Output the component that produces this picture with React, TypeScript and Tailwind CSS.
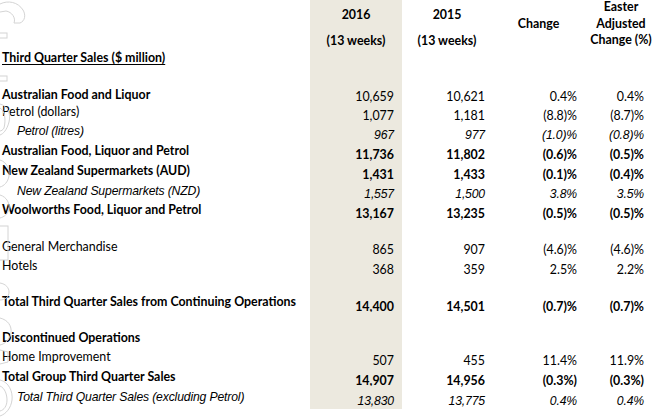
import React from "react";

type Kind = "b" | "n" | "i";
type Row = {
  label: string;
  kind: Kind;
  valKind?: Kind;
  vals?: string[];
  h: number;
  lpt: number;
  npt: number;
  indent?: boolean;
};

const rows: (Row | { blank: number })[] = [
  { label: "Australian Food and Liquor", kind: "b", valKind: "n", vals: ["10,659", "10,621", "0.4%", "0.4%"], h: 19, lpt: 4, npt: 6 },
  { label: "Petrol (dollars)", kind: "n", vals: ["1,077", "1,181", "(8.8)%", "(8.7)%"], h: 19, lpt: 2, npt: 6 },
  { label: "Petrol (litres)", kind: "i", indent: true, vals: ["967", "977", "(1.0)%", "(0.8)%"], h: 19, lpt: 2, npt: 6 },
  { label: "Australian Food, Liquor and Petrol", kind: "b", vals: ["11,736", "11,802", "(0.6)%", "(0.5)%"], h: 20, lpt: 3, npt: 7 },
  { label: "New Zealand Supermarkets (AUD)", kind: "b", vals: ["1,431", "1,433", "(0.1)%", "(0.4)%"], h: 20, lpt: 3, npt: 7 },
  { label: "New Zealand Supermarkets (NZD)", kind: "i", indent: true, vals: ["1,557", "1,500", "3.8%", "3.5%"], h: 20, lpt: 3, npt: 6 },
  { label: "Woolworths Food, Liquor and Petrol", kind: "b", vals: ["13,167", "13,235", "(0.5)%", "(0.5)%"], h: 19, lpt: 2, npt: 6 },
  { blank: 17 },
  { label: "General Merchandise", kind: "n", vals: ["865", "907", "(4.6)%", "(4.6)%"], h: 19, lpt: 3, npt: 6 },
  { label: "Hotels", kind: "n", vals: ["368", "359", "2.5%", "2.2%"], h: 19, lpt: 3, npt: 7 },
  { blank: 15 },
  { label: "Total Third Quarter Sales from Continuing Operations", kind: "b", vals: ["14,400", "14,501", "(0.7)%", "(0.7)%"], h: 22, lpt: 5, npt: 10 },
  { blank: 16 },
  { label: "Discontinued Operations", kind: "b", h: 19, lpt: 3, npt: 0 },
  { label: "Home Improvement", kind: "n", vals: ["507", "455", "11.4%", "11.9%"], h: 19, lpt: 3, npt: 7 },
  { label: "Total Group Third Quarter Sales", kind: "b", vals: ["14,907", "14,956", "(0.3%)", "(0.3%)"], h: 20, lpt: 4, npt: 8 },
  { label: "Total Third Quarter Sales (excluding Petrol)", kind: "i", indent: true, vals: ["13,830", "13,775", "0.4%", "0.4%"], h: 23, lpt: 4, npt: 8 },
];

function kindClass(k: Kind) {
  if (k === "b") return "font-bold";
  if (k === "i") return "italic font-normal font-['Liberation_Sans',Arial,sans-serif] text-[12.2px] tracking-[-0.15px]";
  return "font-normal";
}

const GRID = "grid grid-cols-[310px_92px_90px_93px_72px]";

function Watermark() {
  return (
    <svg
      className="absolute left-0 top-0 pointer-events-none"
      width="30"
      height="417"
      viewBox="0 0 30 417"
      fill="none"
      stroke="#d4d4d4"
      strokeWidth="1"
    >
      <path d="M0 4 C8 0 18 2 23 10 C26 15 25 21 20 23 L14 23 C16 18 12 12 6 11 L0 12" />
      <rect x="-2" y="33" width="9" height="5" />
      <rect x="-2" y="76" width="9" height="5" />
      <path d="M0 104 C8 106 11 114 9 122 C7 130 3 134 0 135" />
      <path d="M0 108 C5 111 6 120 4 128 C3 130 1 131 0 131" />
      <path d="M0 160 C7 162 10 170 9 176 C8 182 4 186 0 187" />
      <path d="M0 195 C7 197 10 204 9 209 C8 214 4 217 0 218" />
      <rect x="-2" y="226" width="10" height="34" />
      <path d="M0 283 C6 284 9 288 9 292 C9 297 5 300 0 300" />
      <path d="M0 318 C8 320 12 326 11 333 C10 339 5 344 0 345" />
      <path d="M0 350 L8 352 L8 362 L0 364" />
      <path d="M0 380 C9 382 13 392 12 400 C11 408 6 414 0 416" />
      <path d="M0 386 C5 388 7 395 7 400 C7 406 4 410 0 411" />
    </svg>
  );
}

export default function App() {
  return (
    <div className="relative w-[657px] h-[417px] bg-white text-black overflow-hidden font-['Lato','Liberation_Sans',sans-serif] text-[12.4px] leading-[14px]">
      {/* header */}
      <div className={`${GRID} h-[84px]`}>
        <div className="pl-[2px] pt-[51px]">
          <span className="font-bold underline underline-offset-[2px] decoration-1">
            Third Quarter Sales ($ million)
          </span>
        </div>
        <div className="bg-[#ece9df] font-bold text-center pt-[8px]">
          <div>2016</div>
          <div className="mt-[12px]">(13 weeks)</div>
        </div>
        <div className="font-bold text-center pt-[8px]">
          <div>2015</div>
          <div className="mt-[12px]">(13 weeks)</div>
        </div>
        <div className="font-bold text-center pt-[17px]">Change</div>
        <div className="font-bold text-center leading-[16.5px] -mt-[1px]">
          <div>Easter</div>
          <div>Adjusted</div>
          <div>Change (%)</div>
        </div>
      </div>

      {rows.map((r, i) => {
        if ("blank" in r) {
          return (
            <div key={i} className={GRID} style={{ height: r.blank }}>
              <div />
              <div className="bg-[#ece9df]" />
              <div />
              <div />
              <div />
            </div>
          );
        }
        const k = kindClass(r.kind);
        const vk = kindClass(r.valKind ?? r.kind);
        const v = r.vals ?? ["", "", "", ""];
        return (
          <div key={i} className={GRID} style={{ height: r.h }}>
            <div className={`${k} whitespace-nowrap ${r.indent ? "pl-[17px]" : "pl-[2px]"}`} style={{ paddingTop: r.lpt }}>
              {r.label}
            </div>
            <div className={`${vk} bg-[#ece9df] text-right pr-[8px]`} style={{ paddingTop: r.npt }}>
              {v[0]}
            </div>
            <div className={`${vk} text-right pr-[7px]`} style={{ paddingTop: r.npt }}>
              {v[1]}
            </div>
            <div className={`${vk} text-right pr-[8px]`} style={{ paddingTop: r.npt }}>
              {v[2]}
            </div>
            <div className={`${vk} text-right pr-[13px]`} style={{ paddingTop: r.npt }}>
              {v[3]}
            </div>
          </div>
        );
      })}
      <Watermark />
    </div>
  );
}
